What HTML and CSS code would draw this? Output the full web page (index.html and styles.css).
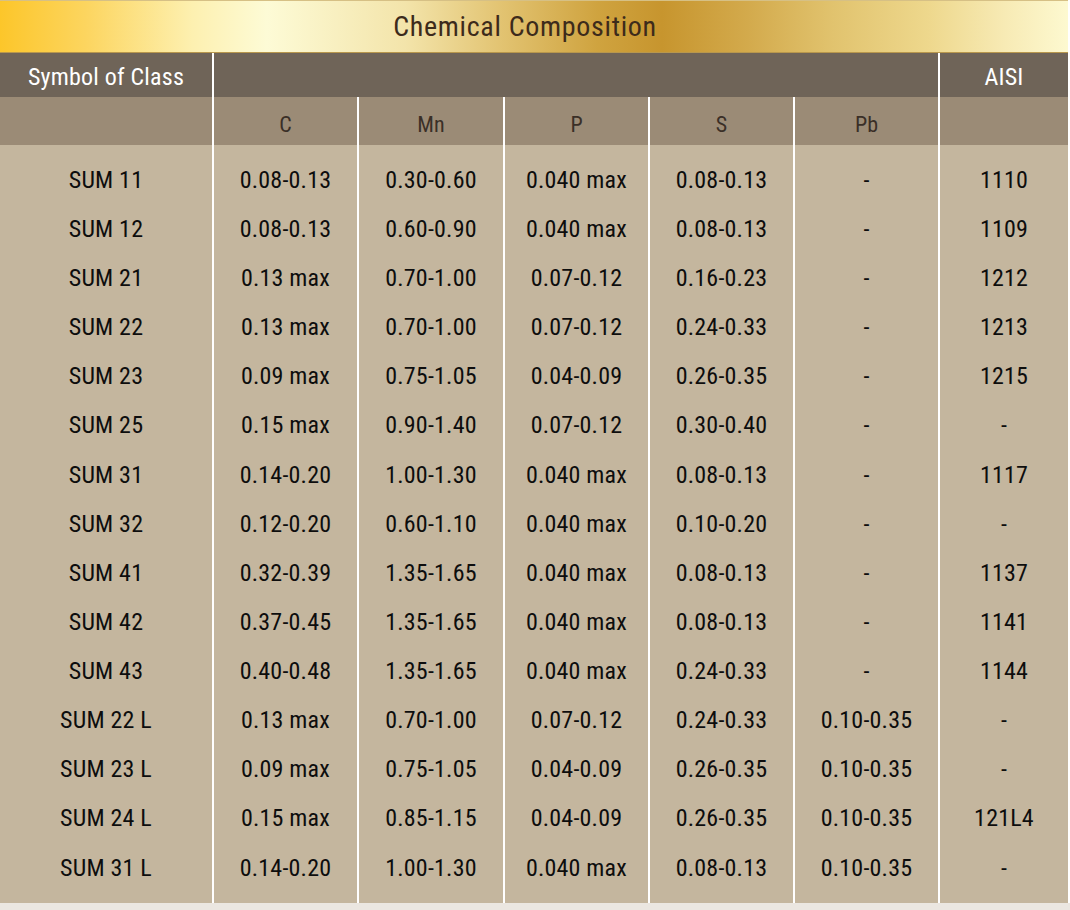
FILE: index.html
```html
<!DOCTYPE html>
<html>
<head>
<meta charset="utf-8">
<link rel="stylesheet" href="styles.css">
</head>
<body>
<table class="comp">
  <colgroup>
    <col class="c-sym"><col class="c-el"><col class="c-el c-mn"><col class="c-el"><col class="c-el"><col class="c-el"><col class="c-aisi">
  </colgroup>
  <thead>
    <tr class="title"><th colspan="7">Chemical Composition</th></tr>
    <tr class="head1"><th>Symbol of Class</th><th colspan="5"></th><th>AISI</th></tr>
    <tr class="head2"><th></th><th>C</th><th>Mn</th><th>P</th><th>S</th><th>Pb</th><th></th></tr>
  </thead>
  <tbody>
    <tr><td>SUM 11</td><td>0.08-0.13</td><td>0.30-0.60</td><td>0.040 max</td><td>0.08-0.13</td><td>-</td><td>1110</td></tr>
    <tr><td>SUM 12</td><td>0.08-0.13</td><td>0.60-0.90</td><td>0.040 max</td><td>0.08-0.13</td><td>-</td><td>1109</td></tr>
    <tr><td>SUM 21</td><td>0.13 max</td><td>0.70-1.00</td><td>0.07-0.12</td><td>0.16-0.23</td><td>-</td><td>1212</td></tr>
    <tr><td>SUM 22</td><td>0.13 max</td><td>0.70-1.00</td><td>0.07-0.12</td><td>0.24-0.33</td><td>-</td><td>1213</td></tr>
    <tr><td>SUM 23</td><td>0.09 max</td><td>0.75-1.05</td><td>0.04-0.09</td><td>0.26-0.35</td><td>-</td><td>1215</td></tr>
    <tr><td>SUM 25</td><td>0.15 max</td><td>0.90-1.40</td><td>0.07-0.12</td><td>0.30-0.40</td><td>-</td><td>-</td></tr>
    <tr><td>SUM 31</td><td>0.14-0.20</td><td>1.00-1.30</td><td>0.040 max</td><td>0.08-0.13</td><td>-</td><td>1117</td></tr>
    <tr><td>SUM 32</td><td>0.12-0.20</td><td>0.60-1.10</td><td>0.040 max</td><td>0.10-0.20</td><td>-</td><td>-</td></tr>
    <tr><td>SUM 41</td><td>0.32-0.39</td><td>1.35-1.65</td><td>0.040 max</td><td>0.08-0.13</td><td>-</td><td>1137</td></tr>
    <tr><td>SUM 42</td><td>0.37-0.45</td><td>1.35-1.65</td><td>0.040 max</td><td>0.08-0.13</td><td>-</td><td>1141</td></tr>
    <tr><td>SUM 43</td><td>0.40-0.48</td><td>1.35-1.65</td><td>0.040 max</td><td>0.24-0.33</td><td>-</td><td>1144</td></tr>
    <tr><td>SUM 22 L</td><td>0.13 max</td><td>0.70-1.00</td><td>0.07-0.12</td><td>0.24-0.33</td><td>0.10-0.35</td><td>-</td></tr>
    <tr><td>SUM 23 L</td><td>0.09 max</td><td>0.75-1.05</td><td>0.04-0.09</td><td>0.26-0.35</td><td>0.10-0.35</td><td>-</td></tr>
    <tr><td>SUM 24 L</td><td>0.15 max</td><td>0.85-1.15</td><td>0.04-0.09</td><td>0.26-0.35</td><td>0.10-0.35</td><td>121L4</td></tr>
    <tr><td>SUM 31 L</td><td>0.14-0.20</td><td>1.00-1.30</td><td>0.040 max</td><td>0.08-0.13</td><td>0.10-0.35</td><td>-</td></tr>
  </tbody>
</table>
</body>
</html>
```
FILE: styles.css
```css
html, body {
  margin: 0;
  padding: 0;
  background: #ebe7e1;
}

.comp {
  margin-left: -2px;
  width: 1072px;
  table-layout: fixed;
  border-collapse: separate;
  border-spacing: 2px 0;
  background: #ffffff;
  font-family: "Roboto Condensed", "Roboto", sans-serif;
  font-stretch: 75%;
  line-height: 1.15;
  text-align: center;
}

.c-sym { width: 212px; }
.c-el { width: 143px; }
.c-mn { width: 144px; }
.c-aisi { width: 128px; }

.comp th, .comp td {
  box-sizing: border-box;
  padding: 0;
  vertical-align: middle;
  font-weight: normal;
}

.title th {
  height: 53px;
  border-top: 1px solid #d6c085;
  border-bottom: 1px solid #b8974d;
  background: linear-gradient(to right,
    #fcc62a 0%,
    #fcd55f 8%,
    #fdf0b0 18%,
    #fdfbd6 25%,
    #f3e4aa 38%,
    #e2c371 47%,
    #cfa33f 56%,
    #c7952e 62%,
    #d3aa4c 70%,
    #e1c36e 78%,
    #eed88d 87%,
    #f7eab4 94%,
    #fdf9d0 100%);
  color: #3d2b1b;
  font-size: 28px;
  letter-spacing: 0.7px;
  padding: 2px 18px 0 0;
}

.head1 th {
  height: 44px;
  background: #6f6458;
  color: #ffffff;
  font-size: 24px;
  letter-spacing: 0.2px;
  padding-top: 5px;
}

.head2 th {
  height: 48px;
  background: #9b8b76;
  color: #3a2f27;
  font-size: 22px;
  padding-top: 8px;
}

.comp td {
  height: 49.14px;
  background: #c4b69e;
  color: #0d0d0d;
  font-size: 24px;
  letter-spacing: 0.2px;
  padding-top: 1px;
}

.comp tbody tr:first-child td {
  height: 59.64px;
  padding-top: 11.5px;
}

.comp tbody tr:last-child td {
  height: 60.14px;
  padding-bottom: 11px;
}
```
